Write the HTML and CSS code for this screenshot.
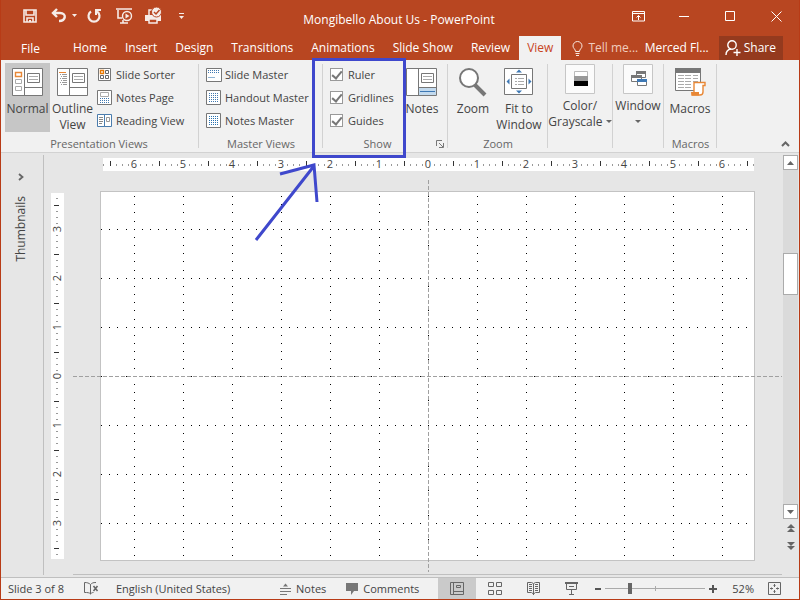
FILE: index.html
```html
<!DOCTYPE html>
<html lang="en">
<head>
<meta charset="utf-8">
<title>Mongibello About Us - PowerPoint</title>
<meta name="viewport" content="width=device-width, initial-scale=1">
<link rel="stylesheet" href="styles.css">
</head>
<body>
<header class="titlebar">
  <div class="quick">
    <button class="qbtn" aria-label="Save"><svg width="16" height="16" viewBox="0 0 16 16"><path d="M2 2h12v12H2z M4 2v5h8V2 M5 14v-4h6v4" fill="none" stroke="#f6ece8" stroke-width="1.600"/><path d="M7 12h2v2H7z" fill="#f6ece8"/></svg></button>
    <button class="qbtn undo" aria-label="Undo"><svg width="26" height="16" viewBox="0 0 26 16"><path d="M6 1L2 5l4 4M2 5h7c7 0 6 8-1 8" fill="none" stroke="#f6ece8" stroke-width="2.4"/><path d="M21 6h5l-2.500 3z" fill="#f6ece8"/></svg></button>
    <button class="qbtn" aria-label="Repeat"><svg width="16" height="16" viewBox="0 0 16 16"><path d="M5 3.500a5.500 5.500 0 1 0 6 0" fill="none" stroke="#f6ece8" stroke-width="2.200"/><path d="M9 2h6M10 1v6" fill="none" stroke="#f6ece8" stroke-width="2"/></svg></button>
    <button class="qbtn show" aria-label="Start From Beginning"><svg width="18" height="18" viewBox="0 0 18 18"><path d="M1 2h16M3 3v8h4M5 16h8M8 13v3" fill="none" stroke="#f6ece8" stroke-width="1.600"/><circle cx="12" cy="9" r="4.500" fill="#b84621" stroke="#f6ece8" stroke-width="1.400"/><path d="M10.500 6.500L14.500 9l-4 2.500z" fill="#f6ece8"/></svg></button>
    <button class="qbtn print" aria-label="Quick Print"><svg width="18" height="18" viewBox="0 0 18 18"><path d="M1 8h16v6H1z" fill="#f6ece8"/><path d="M5 8V3h5M5 12h8v4H5z" fill="#b84621" stroke="#f6ece8" stroke-width="1.500"/><circle cx="12.500" cy="5" r="5" fill="#f6ece8" stroke="#b84621"/><path d="M10 5l2 2 3.500-4" fill="none" stroke="#b84621" stroke-width="1.500"/></svg></button>
    <button class="qbtn more" aria-label="Customize Quick Access Toolbar"><svg width="7" height="8" viewBox="0 0 7 8"><path d="M1 1.500h5" stroke="#f6ece8"/><path d="M1 4h5L3.500 7z" fill="#f6ece8"/></svg></button>
  </div>
  <h1 class="doc">Mongibello About Us - PowerPoint</h1>
  <div class="winbtns">
    <button aria-label="Ribbon Display Options"><svg width="13" height="11" viewBox="0 0 13 11" fill="none" stroke="#fff"><path d="M.5.5h12v9.500H.5zM.5 2.500h12M6.500 9V4.500M4.500 6.500l2-2 2 2"/></svg></button>
    <button aria-label="Minimize"><svg width="11" height="11" viewBox="0 0 11 11"><path d="M0 5.500h10" stroke="#fff"/></svg></button>
    <button aria-label="Maximize"><svg width="11" height="11" viewBox="0 0 11 11"><path d="M.5.5h9v9h-9z" fill="none" stroke="#fff"/></svg></button>
    <button aria-label="Close"><svg width="11" height="11" viewBox="0 0 11 11"><path d="M.5.5l10 10M10.500.5l-10 10" stroke="#fff"/></svg></button>
  </div>
</header>
<nav class="tabs">
  <a class="file" href="#">File</a>
  <a href="#">Home</a>
  <a href="#">Insert</a>
  <a href="#">Design</a>
  <a href="#">Transitions</a>
  <a href="#">Animations</a>
  <a href="#">Slide Show</a>
  <a href="#">Review</a>
  <a class="on" href="#">View</a>
  <button class="tell"><svg width="11" height="15" viewBox="0 0 11 15" fill="none" stroke="#f8e8e0"><path d="M3.500 10.500C3.500 8 1 7.500 1 5a4.500 4.500 0 0 1 9 0c0 2.500-2.500 3-2.500 5.500zM3.500 12.500h4M4 14.500h3"/></svg>Tell me...</button>
  <button class="user">Merced Fl...</button>
  <button class="share"><svg width="16" height="16" viewBox="0 0 16 16" fill="none" stroke="#fff" stroke-width="1.400"><circle cx="7" cy="5" r="4.200"/><path d="M1 15c0-4 2-5.500 5-6M8.500 12.500h7M12 9v7"/></svg>Share</button>
</nav>
<main class="app">
<section class="ribbon" aria-label="View">
  <div class="group views">
    <div class="tools">
      <button class="big on"><svg width="32" height="29" viewBox="0 0 32 29"><path d="M.5.5h30v27H.5z" fill="#fff" stroke="#777"/><path d="M12.500 1v27M12.500 19.500H31" stroke="#777" fill="none"/><path d="M15.500 5.500h12v9h-12z" fill="#fff" stroke="#777"/><path d="M17 8.500h9M17 11.500h9" stroke="#aaa"/><path d="M3.500 4.500h6v4h-6z" fill="#fff" stroke="#e88735" stroke-width="1.400"/><path d="M3.500 11.500h6v4h-6zM3.500 18.500h6v4h-6z" fill="#fff" stroke="#aaa"/></svg><span>Normal</span></button>
      <button class="big"><svg width="32" height="29" viewBox="0 0 32 29"><path d="M.5.5h30v27H.5z" fill="#fff" stroke="#777"/><path d="M12.500 1v27M12.500 19.500H31" stroke="#777" fill="none"/><path d="M15.500 5.500h12v9h-12z" fill="#fff" stroke="#777"/><path d="M17 8.500h9M17 11.500h9" stroke="#aaa"/><path d="M2 4.500h7" stroke="#e88735"/><path d="M3 6.500h1m1 0h5M4 8.500h1m1 0h4M3 10.500h1m1 0h5M4 12.500h1m1 0h4M3 14.500h1m1 0h5M4 16.500h1m1 0h4" stroke="#999"/></svg><span>Outline View</span></button>
      <div class="list">
        <button class="small"><svg width="16" height="16" viewBox="0 0 16 16" fill="none"><path d="M1.500 1.500h12v12h-12z" fill="#fff" stroke="#777"/><path d="M3.500 3.500h3v3h-3z" stroke="#e87800" stroke-width="1.400"/><path d="M8.500 3.500h3v3h-3zM3.500 8.500h3v3h-3zM8.500 8.500h3v3h-3z" stroke="#666"/></svg>Slide Sorter</button>
        <button class="small"><svg width="16" height="16" viewBox="0 0 16 16"><path d="M.5.5h14v14H.5z" fill="#fff" stroke="#777"/><path d="M3.500 2.500h8v4h-8z" fill="none" stroke="#aaa"/><path d="M3 8.500h9M3 10.500h9M3 12.500h9" stroke="#4078b0" stroke-dasharray="1 1"/></svg>Notes Page</button>
        <button class="small"><svg width="16" height="16" viewBox="0 0 16 16"><path d="M.5 1.500h7v12h-7zM7.500 1.500h7v12h-7z" fill="#fff" stroke="#4a7cad"/><path d="M2 4.500h4M2 6.500h4M2 8.500h4M2 10.500h3" stroke="#888"/><path d="M9.500 4.500h3v4h-3z" fill="none" stroke="#999"/></svg>Reading View</button>
      </div>
    </div>
    <h2>Presentation Views</h2>
  </div>
  <div class="group masters">
    <div class="tools"><div class="list">
      <button class="small"><svg width="16" height="16" viewBox="0 0 16 16"><path d="M.5 1.500h15v13H.5z" fill="#fff" stroke="#777"/><path d="M2 3.500h12M2 5.500h12" stroke="#4078b0" stroke-dasharray="1 1"/><path d="M2 10.500h7" stroke="#90b4d4"/></svg>Slide Master</button>
      <button class="small"><svg width="16" height="16" viewBox="0 0 16 16"><path d="M.5.5h14v14H.5z" fill="#fff" stroke="#777"/><path d="M3 3.500h10M3 5.500h10M3 7.500h10M3 9.500h10M3 11.500h10" stroke="#4078b0" stroke-dasharray="1 1"/></svg>Handout Master</button>
      <button class="small"><svg width="16" height="16" viewBox="0 0 16 16"><path d="M.5.5h14v14H.5z" fill="#fff" stroke="#777"/><path d="M3 3.500h10M3 5.500h10M3 7.500h10M3 9.500h10M3 11.500h10" stroke="#2872b0" stroke-dasharray="1 1"/></svg>Notes Master</button>
    </div></div>
    <h2>Master Views</h2>
  </div>
  <div class="group showg">
    <div class="tools">
      <div class="list">
        <label class="check"><input type="checkbox" checked>Ruler</label>
        <label class="check"><input type="checkbox" checked>Gridlines</label>
        <label class="check"><input type="checkbox" checked>Guides</label>
      </div>
      <button class="big notes"><svg width="32" height="29" viewBox="0 0 32 29"><path d="M.5.5h30v27H.5z" fill="#fff" stroke="#777"/><path d="M13 20h17v7H13z" fill="#c3daee"/><path d="M12.500 1v27M12.500 19.500H31" stroke="#777" fill="none"/><path d="M15.500 5.500h12v9h-12z" fill="#fff" stroke="#777"/><path d="M17 8.500h9M17 11.500h9" stroke="#aaa"/><path d="M14 23.500h15" stroke="#3e78b4"/></svg><span>Notes</span></button>
    </div>
    <h2>Show</h2>
    <button class="launch" aria-label="Grid settings"><svg width="8" height="8" viewBox="0 0 8 8"><path d="M.5 6V.5H6M3 3l4 4M7.500 3v4.500H3" fill="none" stroke="#777"/></svg></button>
  </div>
  <div class="group zoomg">
    <div class="tools">
      <button class="big"><svg width="32" height="29" viewBox="0 0 32 29"><path d="M18 17l10 10" stroke="#777" stroke-width="4"/><circle cx="12" cy="10" r="9" fill="#fff" stroke="#777" stroke-width="2"/></svg><span>Zoom</span></button>
      <button class="big"><svg width="32" height="29" viewBox="0 0 32 29"><path d="M1.500.5h28v26h-28z" fill="#fff" stroke="#777"/><path d="M8.500 6.500h15v14h-15z" fill="#fff" stroke="#777"/><path d="M12 10.500h2m1 0h6M12 13.500h2m1 0h6M12 16.500h2m1 0h6" stroke="#aaa"/><path d="M13 4.500h6L16 1.500zM13 22.500h6L16 25.500zM6.500 10.500v6L3.500 13.500zM25.500 10.500v6l3-3z" fill="#3e78b4"/></svg><span>Fit to Window</span></button>
    </div>
    <h2>Zoom</h2>
  </div>
  <div class="group color">
    <button class="framed"><svg width="30" height="30" viewBox="0 0 30 30"><path d="M.5.5h29v29H.5z" fill="#fbfbfb" stroke="#c6c6c6"/><path d="M9.500 7.500h13v5h-13z" fill="#fff" stroke="#bbb"/><path d="M9 12h14v5H9z" fill="#999"/><path d="M9 17h14v5H9z"/></svg><span>Color/<br>Grayscale <i class="caret"></i></span></button>
  </div>
  <div class="group window">
    <button class="framed"><svg width="30" height="30" viewBox="0 0 30 30"><path d="M.5.5h29v29H.5z" fill="#fbfbfb" stroke="#c6c6c6"/><path d="M13.500 7.500h9v6h-9z" fill="#fff" stroke="#777"/><path d="M13 7h10v3H13z" fill="#777"/><path d="M8.500 11.500h10v6h-10z" fill="#fff" stroke="#777"/><path d="M8 11h11v3H8z" fill="#777"/><path d="M14.500 15.500h9v6h-9z" fill="#fff" stroke="#777"/><path d="M14 15h10v3H14z" fill="#3e78b4"/></svg><span>Window<br><i class="caret"></i></span></button>
  </div>
  <div class="group macros">
    <div class="tools"><button class="big"><svg width="32" height="29" viewBox="0 0 32 29"><path d="M1.500.5h25v22h-25z" fill="#fff" stroke="#777"/><path d="M1 0h26v5H1z" fill="#777"/><path d="M4 7.500h6m1 0h6m2 0h5M4 10.500h6m1 0h6m2 0h5M4 13.500h6m1 0h6m2 0h5M4 16.500h6m1 0h6M4 19.500h6m1 0h6" stroke="#aaa"/><path d="M20 25V14.500h11v3h-2V24c0 2-1 3-3 3h-8v-2z" fill="#fff" stroke="#e88735" stroke-width="1.400"/><path d="M17 24h8v3.500h-7z" fill="#e88735"/></svg><span>Macros</span></button></div>
    <h2>Macros</h2>
  </div>
  <button class="collapse" aria-label="Collapse the Ribbon"><svg width="9" height="6" viewBox="0 0 9 6"><path d="M1 5l3.500-3.500L8 5" fill="none" stroke="#666" stroke-width="2"/></svg></button>
</section>
<section class="work">
  <aside class="thumbs">
    <button aria-label="Expand thumbnails"><svg width="6" height="8" viewBox="0 0 6 8"><path d="M1 1l3.500 3L1 7" fill="none" stroke="#666" stroke-width="1.800"/></svg></button>
    <span>Thumbnails</span>
  </aside>
  <svg class="vruler" viewBox="0 0 13 392" role="img" aria-label="Vertical ruler">
    <defs><pattern id="vt" width="13" height="49" patternUnits="userSpaceOnUse"><path d="M5 6h2v1H5zM5 12h2v1H5zM5 18h2v1H5zM5 31h2v1H5zM5 37h2v1H5zM5 43h2v1H5z" fill="#999"/><path d="M3 25h5v1H3z" fill="#333"/></pattern></defs>
    <path d="M0 13h13v366H0z" fill="#fff"/>
    <path d="M0 13h13v366H0z" fill="url(#vt)"/>
    <g class="nums"><text transform="translate(10 49) rotate(-90)">3</text><text transform="translate(10 98) rotate(-90)">2</text><text transform="translate(10 147) rotate(-90)">1</text><text transform="translate(10 196) rotate(-90)">0</text><text transform="translate(10 245) rotate(-90)">1</text><text transform="translate(10 294) rotate(-90)">2</text><text transform="translate(10 343) rotate(-90)">3</text></g>
  </svg>
  <div class="canvas">
    <svg class="hruler" viewBox="0 0 709 13" role="img" aria-label="Horizontal ruler">
      <defs><pattern id="ht" x="12" width="49" height="13" patternUnits="userSpaceOnUse"><path d="M6 6h1v2H6zM12 6h1v2H12zM18 6h1v2H18zM31 6h1v2H31zM37 6h1v2H37zM43 6h1v2H43z" fill="#999"/><path d="M25 3h1v5H25z" fill="#333"/></pattern></defs>
      <path d="M30 0h651v13H30z" fill="#fff"/><path d="M30 0h651v13H30z" fill="url(#ht)"/>
      <g class="nums"><text x="61" y="10">6</text><text x="110" y="10">5</text><text x="159" y="10">4</text><text x="208" y="10">3</text><text x="257" y="10">2</text><text x="306" y="10">1</text><text x="355" y="10">0</text><text x="404" y="10">1</text><text x="453" y="10">2</text><text x="502" y="10">3</text><text x="551" y="10">4</text><text x="600" y="10">5</text><text x="649" y="10">6</text></g>
    </svg>
    <svg class="stage" viewBox="0 0 709 392" role="img" aria-label="Slide with gridlines and guides">
      <defs><pattern id="grid" x="12" width="49" height="49" patternUnits="userSpaceOnUse"><path d="M0 0h1v1H0zM8 0h1v1H8zM16 0h1v1H16zM24 0h1v1H24zM32 0h1v1H32zM41 0h1v1H41zM0 8h1v1H0zM0 16h1v1H0zM0 24h1v1H0zM0 32h1v1H0zM0 41h1v1H0z" fill="#000"/></pattern></defs>
      <path d="M27.500 11.500h654v369h-654z" fill="#fff" stroke="#c3c3c3"/>
      <path d="M28 12h653v368H28z" fill="url(#grid)"/>
      <path d="M0 196.500h709M355.500 0v392" stroke="#a0a0a0" stroke-dasharray="4 2" fill="none"/>
    </svg>
  </div>
  <div class="scroll">
    <button aria-label="Scroll up"><svg width="7" height="4" viewBox="0 0 7 4"><path d="M0 4h7L3.500 0z" fill="#666"/></svg></button>
    <div class="track"><div class="thumb"></div></div>
    <button aria-label="Scroll down"><svg width="7" height="4" viewBox="0 0 7 4"><path d="M0 0h7L3.500 4z" fill="#666"/></svg></button>
    <button class="bare" aria-label="Previous slide"><svg width="8" height="8" viewBox="0 0 8 8"><path d="M0 4h8L4 0zM0 8h8L4 4z" fill="#666"/></svg></button>
    <button class="bare" aria-label="Next slide"><svg width="8" height="8" viewBox="0 0 8 8"><path d="M0 0h8L4 4zM0 4h8L4 8z" fill="#666"/></svg></button>
  </div>
</section>
</main>
<footer class="status">
  <span class="count">Slide 3 of 8</span>
  <button aria-label="Spelling"><svg width="15" height="13" viewBox="0 0 15 13" fill="none" stroke="#666"><path d="M6.500 2.500C5 1 3 .5.5.5v10c3 0 5 0 6 1.500 1-1 1.500-1.500 3-1.500M6.500 2.500V12M6.500 2.500C8 1 9 .5 12 .5"/><path d="M9.500 4l4 5M13.500 4l-4 5" stroke-width="1.600"/></svg></button>
  <span class="lang">English (United States)</span>
  <button class="txt"><svg width="11" height="12" viewBox="0 0 11 12"><path d="M0 5.500h11M0 8.500h11M0 11.500h7" stroke="#777"/><path d="M3 3.500h5L5.500.5z" fill="#777"/></svg>Notes</button>
  <button class="txt"><svg width="12" height="12" viewBox="0 0 12 12"><path d="M0 0h12v8H8l-3 4V8H0z" fill="#777"/></svg>Comments</button>
  <div class="modes">
    <button class="on" aria-label="Normal view"><svg width="14" height="13" viewBox="0 0 14 13" fill="none" stroke="#666"><path d="M.5.5h13v12H.5zM3.500.5v12M3.500 9.500h10M6.500 3.500h4v2h-4z"/></svg></button>
    <button aria-label="Slide sorter view"><svg width="14" height="13" viewBox="0 0 14 13" fill="none" stroke="#666"><path d="M.5.500h5v4h-5zM8.500.5h5v4h-5zM.5 8.500h5v4h-5zM8.500 8.500h5v4h-5z"/></svg></button>
    <button aria-label="Reading view"><svg width="13" height="13" viewBox="0 0 13 13" fill="none" stroke="#666"><path d="M.5.5h4l2 1 2-1h4v10h-4l-2 1.500-2-1.500h-4zM6.500 2v11M2 2.500h3M2 4.500h3M2 6.500h3M2 8.500h3M8 2.500h3M8 4.500h3M8 6.500h3M8 8.500h3"/></svg></button>
    <button aria-label="Slide show"><svg width="13" height="13" viewBox="0 0 13 13" fill="none" stroke="#666"><path d="M0 1h13" stroke-width="2"/><path d="M1.500 2v5.500h10V2M4 4.500h5M6.500 8v4M4 12.500h5"/></svg></button>
  </div>
  <div class="zoom">
    <button aria-label="Zoom out"><svg width="6" height="8" viewBox="0 0 6 8"><path d="M0 4h6" stroke="#555" stroke-width="2"/></svg></button>
    <input type="range" min="0" max="100" value="24" aria-label="Zoom level">
    <button aria-label="Zoom in"><svg width="8" height="8" viewBox="0 0 8 8"><path d="M0 4h8M4 0v8" stroke="#555" stroke-width="2"/></svg></button>
  </div>
  <span class="pct">52%</span>
  <button aria-label="Fit slide to window"><svg width="13" height="13" viewBox="0 0 13 13" fill="none" stroke="#666"><path d="M.5.500h12v12H.5zM6.500 2v3M6.500 8v3M2 6.500h3M8 6.500h3M5.500 3.500h2M5.500 9.500h2M3.500 5.500v2M9.500 5.500v2"/></svg></button>
</footer>
<svg class="note" width="160" height="190" viewBox="0 0 160 190" fill="none" stroke="#3f48cc" stroke-width="3" aria-hidden="true"><path d="M63.500 4.500h91v97h-91z"/><path d="M6 185L64 111M30 119l34-9 3 37"/></svg>
</body>
</html>
```

FILE: styles.css
```css
* { box-sizing: border-box; }
body {
  margin: 0;
  min-height: 100vh;
  display: flex;
  flex-direction: column;
  position: relative;
  background: #e6e6e6;
  border: 1px solid #b83b16;
  border-top: 0;
  color: #444;
  font: 12px/16px "Open Sans", "Noto Sans", sans-serif;
}
button {
  font: inherit;
  color: inherit;
  background: none;
  border: 0;
  padding: 0;
  display: flex;
  align-items: center;
  justify-content: center;
}
svg { display: block; flex: none; }
h1, h2 { margin: 0; font-weight: 400; }
h1 { font-size: 12px; }
h2 { font-size: 11px; }

.titlebar {
  background: #b84621;
  color: #fff;
  height: 36px;
  display: grid;
  grid-template-columns: 1fr auto 1fr;
  align-items: center;
  padding-bottom: 4px;
}
.quick { display: flex; align-items: center; padding-left: 21px; }
.undo { margin-left: 13px; }
.qbtn + .qbtn:nth-child(3) { margin-left: 9px; }
.show { margin-left: 13px; }
.print { margin-left: 11px; }
.more { margin-left: 16px; }
.doc { padding: 8px 2px 0 0; }
.winbtns { display: flex; justify-content: flex-end; }
.winbtns button { width: 46px; height: 32px; }

.tabs {
  background: #b84621;
  color: #fff;
  height: 24px;
  display: flex;
  align-items: stretch;
  padding-right: 16px;
}
.tabs a {
  color: #fff;
  text-decoration: none;
  padding: 4px 9px;
  white-space: nowrap;
}
.tabs .file { padding: 5px 24px 3px 20px; }
.tabs .on { background: #f1f1f1; color: #c8451f; padding: 4px 8px; }
.tabs button { white-space: nowrap; }
.tell { gap: 5px; padding-left: 11px; color: #f0cdbf; }
.user { margin-left: auto; }
.share { background: #943a1e; gap: 3px; padding: 0 7px 0 6px; margin-left: 10px; }

.app { flex: 1; display: flex; flex-direction: column; }
.ribbon {
  display: flex;
  background: #f1f1f1;
  border-bottom: 1px solid #d2d2d2;
  height: 93px;
  position: relative;
}
.group {
  flex: none;
  display: flex;
  flex-direction: column;
  position: relative;
  padding-top: 3px;
}
.group::after {
  content: "";
  position: absolute;
  top: 4px;
  right: 0;
  bottom: 4px;
  width: 1px;
  background: #d2d2d2;
}
.group h2 { margin-top: auto; text-align: center; color: #666; }
.tools { display: flex; }
.big {
  flex-direction: column;
  justify-content: flex-start;
  width: 46px;
  height: 69px;
  padding-top: 5px;
  gap: 4px;
}
.big.on { background: #c6c6c6; }
.views { width: 198px; padding-left: 4px; }
.views .big { width: 45px; }
.views h2 { padding-right: 6px; }
.masters { width: 124px; }
.showg { width: 125px; }
.showg h2 { padding-right: 16px; }
.zoomg { width: 100px; }
.color { width: 65px; }
.window { width: 51px; }
.macros { width: 53px; }
.list { display: flex; flex-direction: column; font-size: 11px; }
.views .list { padding-left: 2px; }
.masters .list { padding-left: 7px; }
.showg .list { padding-left: 7px; width: 76px; }
.small, .check {
  display: flex;
  align-items: center;
  justify-content: flex-start;
  gap: 3px;
  height: 23px;
  white-space: nowrap;
}
.check { gap: 5px; }
.check input {
  appearance: none;
  width: 13px;
  height: 13px;
  margin: 0;
  border: 1px solid #999;
  background: #fff;
  display: grid;
  place-items: center;
}
.check input:checked::before {
  content: "";
  width: 4px;
  height: 8px;
  margin-bottom: 2px;
  border: solid #777;
  border-width: 0 2px 2px 0;
  transform: rotate(40deg);
}
.zoomg .tools { padding-left: 2px; }
.macros .tools { padding-left: 3px; }
.framed { flex-direction: column; gap: 4px; padding: 1px 1px 0 0; text-align: center; white-space: nowrap; }
.caret {
  display: inline-block;
  border: 3px solid transparent;
  border-top-color: #666;
  border-bottom: 0;
  vertical-align: 3px;
}
.launch { position: absolute; right: 4px; bottom: 4px; }
.collapse { position: absolute; right: 9px; bottom: 5px; }

.work { flex: 1; display: grid; grid-template-columns: 43px 7px 13px 9px 1fr 17px; border-bottom: 1px solid #bfbfbf; }
.thumbs {
  border-right: 1px solid #bfbfbf;
  margin: 2px 0;
  padding: 18px 3px 0 0;
  display: flex;
  flex-direction: column;
  align-items: center;
  gap: 15px;
}
.thumbs span { writing-mode: vertical-rl; transform: rotate(180deg); }
.vruler { grid-column: 3; width: 100%; margin-top: 27px; }
.canvas { grid-column: 5; padding-top: 5px; border-bottom: 1px solid #bfbfbf; margin-bottom: 2px; }
.hruler, .stage { width: 100%; shape-rendering: crispEdges; }
.hruler, .vruler { overflow: visible; }
.stage { margin-top: 9px; }
.nums text { font-size: 11px; fill: #444; text-anchor: middle; }
.scroll { display: flex; flex-direction: column; align-items: center; padding: 2px 1px 22px; }
.scroll button { width: 15px; height: 15px; background: #fff; border: 1px solid #ababab; }
.scroll .bare { background: none; border: 0; height: 18px; }
.track { flex: 1; width: 15px; background: #dadada; padding-top: 83px; }
.thumb { height: 42px; background: #fff; border: 1px solid #ababab; }

.status { height: 21px; background: #f1f1f1; display: flex; align-items: center; padding: 0 18px 0 7px; font-size: 11px; }
.count { width: 76px; }
.lang { margin: 0 auto 0 17px; }
.txt { gap: 5px; margin-right: 20px; }
.modes { display: flex; align-self: stretch; margin-left: -1px; }
.modes button { width: 38px; }
.modes .on { background: #cacaca; }
.zoom { display: flex; align-items: center; gap: 4px; margin-left: 5px; }
.zoom input {
  appearance: none;
  width: 100px;
  height: 12px;
  margin: 0;
  background: linear-gradient(#aaa, #aaa) center/1px 5px no-repeat, linear-gradient(#aaa, #aaa) center/100% 1px no-repeat;
}
.zoom input::-webkit-slider-thumb { appearance: none; width: 4px; height: 11px; background: #666; }
.pct { margin: 0 14px 0 15px; }
.note { position: absolute; left: 249px; top: 55px; pointer-events: none; }
```
